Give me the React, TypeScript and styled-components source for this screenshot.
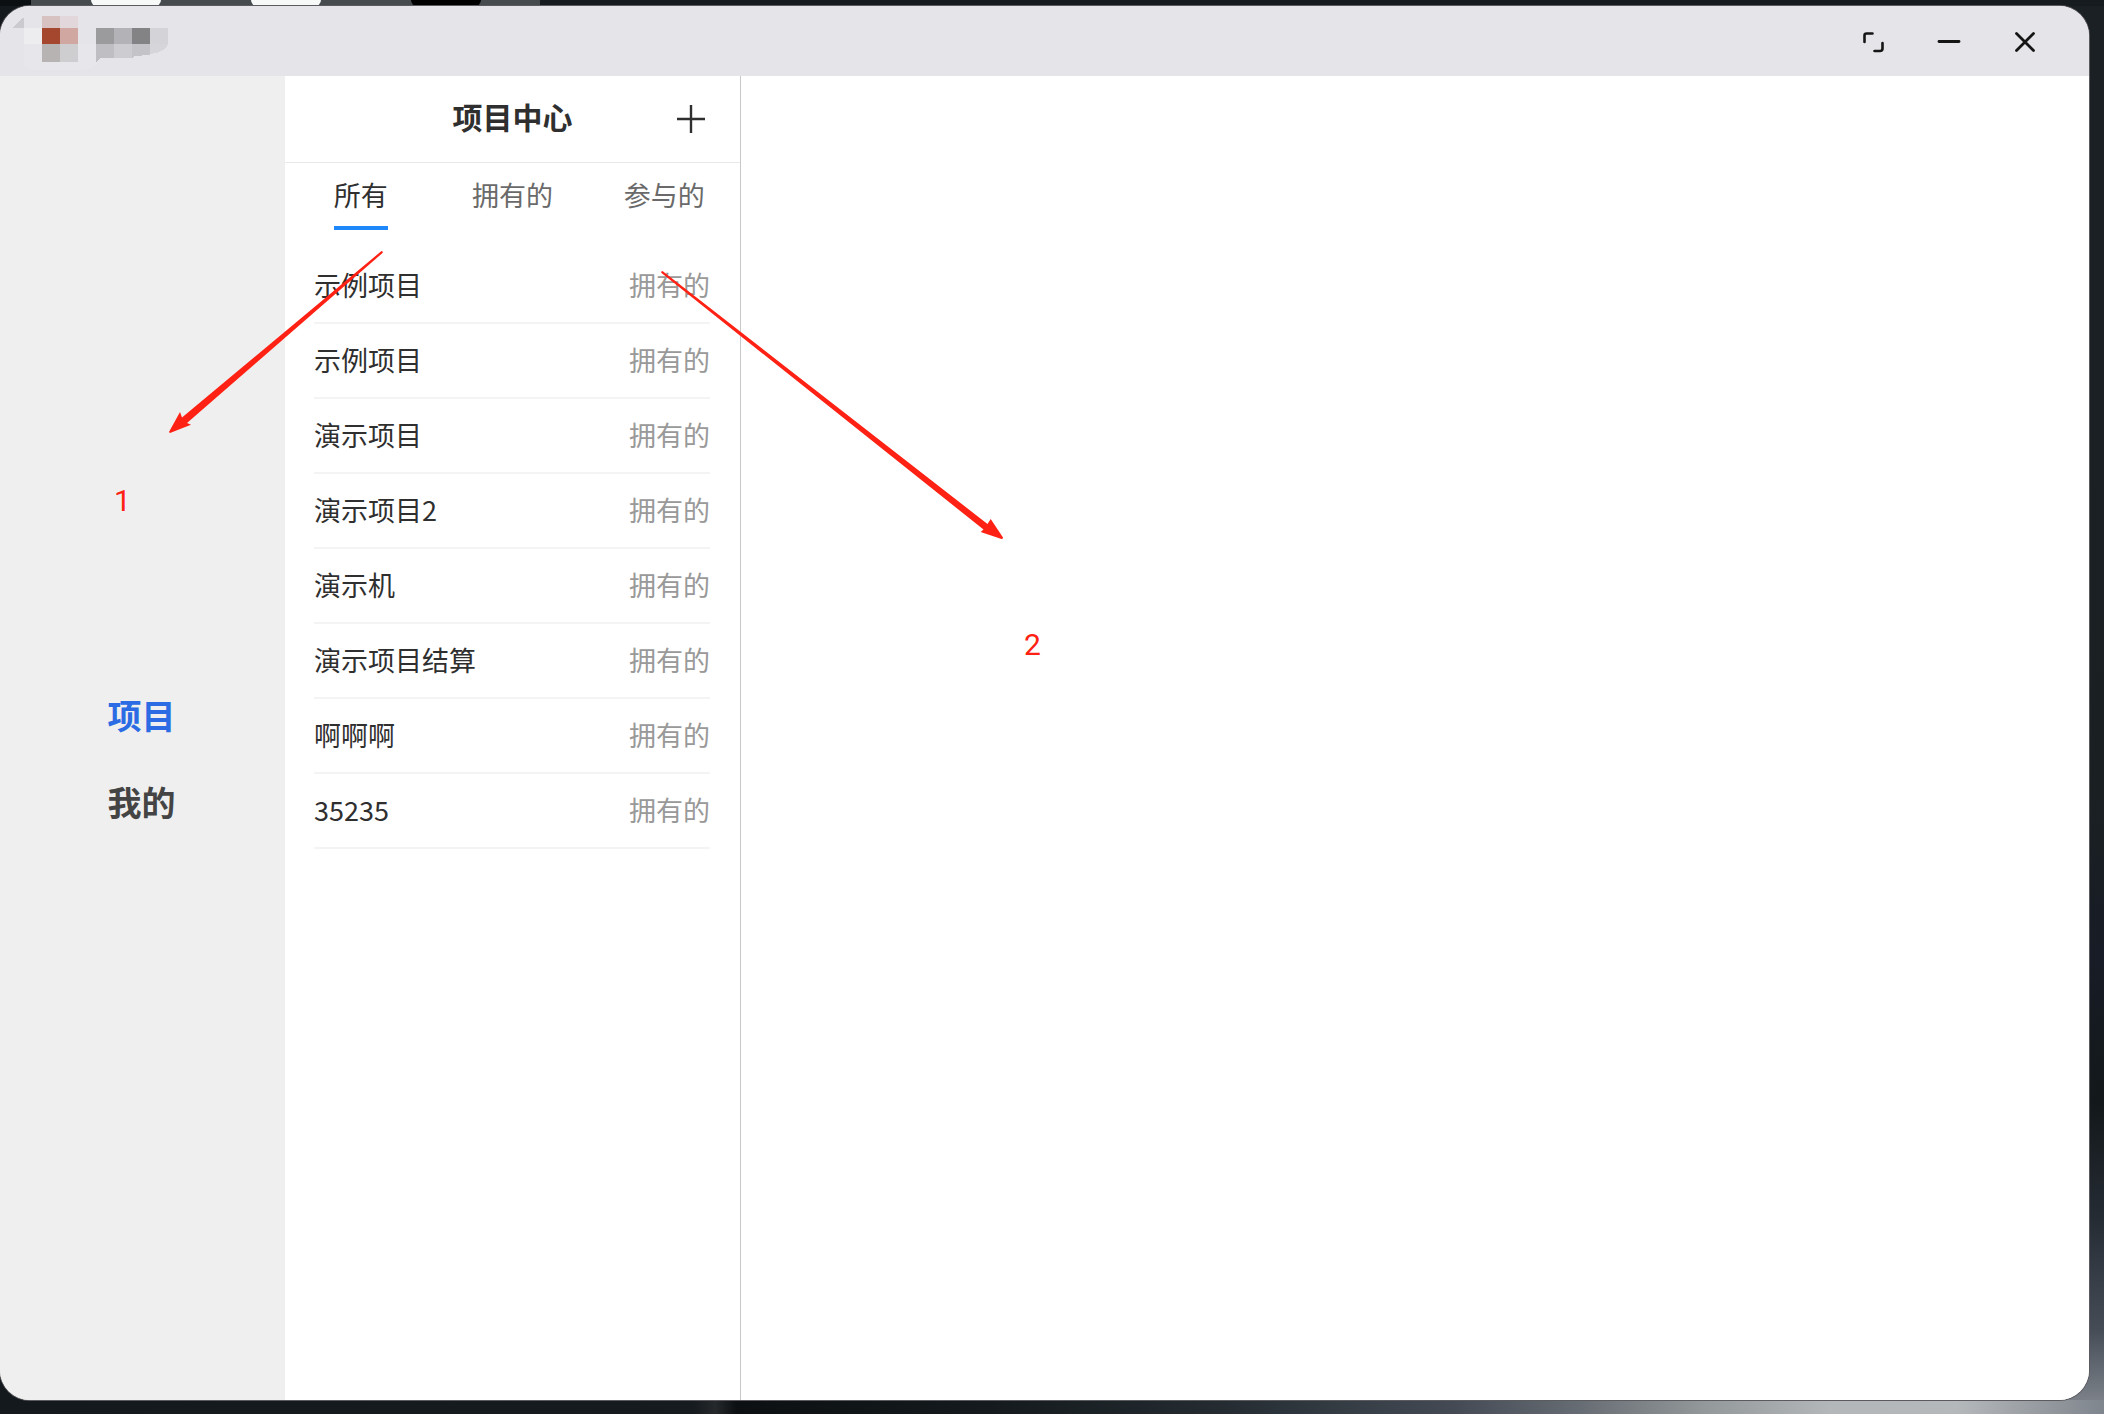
import React, { useState } from "react";
import styled, { createGlobalStyle } from "styled-components";

const GlobalStyle = createGlobalStyle`
  *, *::before, *::after { box-sizing: border-box; }
  html { background: #14191d; }
  body {
    margin: 0;
    font-family: "Noto Sans CJK SC", "Noto Sans", sans-serif;
    color: #2f2f2f;
  }
  button { font: inherit; color: inherit; border: 0; padding: 0; background: none; cursor: pointer; }
`;

const Desktop = styled.div`
  position: relative;
  display: flex;
  flex-direction: column;
  min-height: 100vh;
  padding: 0 15px 14px 0;
  background:
    linear-gradient(90deg, #14191d 0, #161b1f 33%, #26292c 34%, #0c1013 35%, #141a1d 47%, #242c32 58%, #434a54 69%, #666c73 75%, #93989a 81%, #b3b7b9 87%, #b5b8bb 93%, #7f858d 100%) bottom / 100% 14px no-repeat,
    linear-gradient(180deg, #1a2024 0, #1a2022 56%, #171c26 68%, #13181a 78%, #242b33 86%, #454c56 94%, #868b92 100%) right / 50px 100% no-repeat,
    #14191d;
`;

const DockStrip = styled.div`
  display: flex;
  height: 6px;
  margin-right: -15px;
  background: #161b20;
`;

const DockEdge = styled.span`
  width: 31px;
  background: #0b0f12;
`;

const Dock = styled.div`
  display: flex;
  gap: 90px;
  width: 509px;
  padding-left: 60px;
  background: #464b4d;
`;

const DockIcon = styled.span<{ $color: string }>`
  width: 70px;
  border-radius: 0 0 8px 8px;
  background: ${(p) => p.$color};
`;

const Window = styled.main`
  flex: 1;
  display: flex;
  flex-direction: column;
  overflow: hidden;
  border-radius: 30px;
  background: #fff;
  box-shadow: 0 0 0 1px #5b5a5f;
`;

const TitleBar = styled.header`
  display: flex;
  align-items: center;
  justify-content: space-between;
  height: 70px;
  padding-right: 44px;
  background: #e5e4e9;
`;

const Brand = styled.svg`
  width: 180px;
  height: 70px;
`;

const WindowControls = styled.div`
  display: flex;
  gap: 36px;
`;

const IconButton = styled.button`
  display: grid;
  place-items: center;
  width: 40px;
  height: 40px;
`;

const Body = styled.div`
  flex: 1;
  display: grid;
  grid-template-columns: 285px 456px 1fr;
`;

const Sidebar = styled.nav`
  display: flex;
  flex-direction: column;
  align-items: center;
  justify-content: center;
  gap: 39px;
  padding: 41px 2px 0 0;
  background: #efefef;
`;

const NavButton = styled.button<{ $active: boolean }>`
  font-size: 34px;
  line-height: 48px;
  font-weight: 700;
  color: ${(p) => (p.$active ? "#2b6be4" : "#444")};
`;

const ProjectPanel = styled.section`
  border-right: 1px solid #c8c8c8;
`;

const PanelHeader = styled.div`
  display: grid;
  grid-template-columns: 1fr auto 1fr;
  align-items: center;
  height: 87px;
  padding: 0 29px;
  border-bottom: 1px solid #e9e9e9;
`;

const PanelTitle = styled.h1`
  grid-column: 2;
  margin: 0;
  padding-bottom: 6px;
  font-size: 30px;
  line-height: 44px;
  font-weight: 700;
`;

const AddButton = styled(IconButton)`
  justify-self: end;
`;

const Tabs = styled.div`
  display: grid;
  grid-template-columns: repeat(3, 1fr);
  justify-items: center;
  height: 67px;
`;

const Tab = styled.button<{ $active: boolean }>`
  padding-top: 1px;
  font-size: 27px;
  line-height: 38px;
  color: ${(p) => (p.$active ? "#2f2f2f" : "#6a6a6a")};
  border-bottom: 4px solid ${(p) => (p.$active ? "#1e88fa" : "transparent")};
`;

const ProjectList = styled.ul`
  margin: 0;
  padding: 19px 30px 0 29px;
  list-style: none;
`;

const ProjectRow = styled.li`
  display: flex;
  align-items: center;
  justify-content: space-between;
  height: 75px;
  padding-bottom: 1px;
  border-bottom: 2px solid #f4f4f4;
  font-size: 27px;
  line-height: 38px;
`;

const ProjectLink = styled.a`
  color: #2f2f2f;
  text-decoration: none;
`;

const Role = styled.span`
  color: #999;
`;

const Detail = styled.section`
  background: #fff;
`;

const Markup = styled.svg`
  position: absolute;
  inset: 0;
  width: 100%;
  height: 100%;
  pointer-events: none;
  fill: #ff2113;
`;

const MarkLabel = styled.span<{ $x: number; $y: number }>`
  position: absolute;
  left: ${(p) => p.$x}px;
  top: ${(p) => p.$y}px;
  font-family: Roboto, sans-serif;
  font-size: 30px;
  line-height: 44px;
  color: #ff2113;
  pointer-events: none;
`;

const dockIcons = ["#f7f8f8", "#f7f8f8", "#000"];
const navItems = ["项目", "我的"];
const tabItems = ["所有", "拥有的", "参与的"];
const projects = ["示例项目", "示例项目", "演示项目", "演示项目2", "演示机", "演示项目结算", "啊啊啊", "35235"];

export default function App() {
  const [nav, setNav] = useState("项目");
  const [tab, setTab] = useState("所有");

  return (
    <>
      <GlobalStyle />
      <Desktop>
        <DockStrip>
          <DockEdge />
          <Dock>
            {dockIcons.map((color, i) => (
              <DockIcon key={i} $color={color} />
            ))}
          </Dock>
        </DockStrip>
        <Window>
          <TitleBar>
            <Brand viewBox="0 0 180 70" aria-hidden="true" shapeRendering="crispEdges">
              <path d="M12 22 L22 12 H24 V22 Z" fill="#cbcacf" />
              <path d="M24 38 V56 Q24 64 38 64 H78 Q94 64 98 56 V38 Z" fill="#e7e6eb" />
              <rect x="24" y="22" width="18" height="16" fill="#ededef" />
              <rect x="42" y="10" width="18" height="12" fill="#d8c1c1" />
              <rect x="60" y="10" width="18" height="12" fill="#e2d7db" />
              <rect x="42" y="22" width="18" height="16" fill="#a5472f" />
              <rect x="60" y="22" width="18" height="16" fill="#d1a8a1" />
              <rect x="42" y="38" width="18" height="18" fill="#b7b3b2" />
              <rect x="60" y="38" width="18" height="18" fill="#cecdcf" />
              <rect x="96" y="22" width="18" height="16" fill="#9b9b9d" />
              <rect x="114" y="22" width="18" height="16" fill="#b3b2b7" />
              <rect x="132" y="22" width="18" height="16" fill="#838385" />
              <rect x="150" y="22" width="18" height="16" fill="#d4d3d8" />
              <path d="M96 38 H114 V52 H100 L96 56 Z" fill="#bfbec3" />
              <rect x="114" y="38" width="18" height="14" fill="#cdccd1" />
              <path d="M132 38 H150 V49 L134 50 L132 52 Z" fill="#c4c3c8" />
              <path d="M150 38 H168 Q166 46 150 48 Z" fill="#d6d5da" />
            </Brand>
            <WindowControls>
              <IconButton aria-label="最大化">
                <svg width="22" height="24" viewBox="0 0 22 24" fill="none" stroke="#151515" strokeWidth="2.6" strokeLinecap="round" strokeLinejoin="round">
                  <path d="M2.500 13 V6.500 Q2.500 4.500 4.500 4.500 H10.500 M20.500 14 V19.500 Q20.500 22 18 22 H12.500" />
                </svg>
              </IconButton>
              <IconButton aria-label="最小化">
                <svg width="24" height="22" viewBox="0 0 24 22" fill="none" stroke="#151515" strokeWidth="2.8" strokeLinecap="round">
                  <path d="M2 11.500 H22" />
                </svg>
              </IconButton>
              <IconButton aria-label="关闭">
                <svg width="22" height="24" viewBox="0 0 22 24" fill="none" stroke="#151515" strokeWidth="2.8" strokeLinecap="round">
                  <path d="M2.500 4.500 L19.500 21.500 M19.500 4.500 L2.500 21.500" />
                </svg>
              </IconButton>
            </WindowControls>
          </TitleBar>
          <Body>
            <Sidebar>
              {navItems.map((item) => (
                <NavButton key={item} $active={nav === item} onClick={() => setNav(item)}>
                  {item}
                </NavButton>
              ))}
            </Sidebar>
            <ProjectPanel>
              <PanelHeader>
                <PanelTitle>项目中心</PanelTitle>
                <AddButton aria-label="新建项目">
                  <svg width="28" height="28" viewBox="0 0 28 28" fill="none" stroke="#2f2f2f" strokeWidth="2.4">
                    <path d="M14 0 V28 M0 14 H28" />
                  </svg>
                </AddButton>
              </PanelHeader>
              <Tabs role="tablist">
                {tabItems.map((item) => (
                  <Tab key={item} role="tab" aria-selected={tab === item} $active={tab === item} onClick={() => setTab(item)}>
                    {item}
                  </Tab>
                ))}
              </Tabs>
              <ProjectList>
                {projects.map((name, i) => (
                  <ProjectRow key={i}>
                    <ProjectLink href="#">{name}</ProjectLink>
                    <Role>拥有的</Role>
                  </ProjectRow>
                ))}
              </ProjectList>
            </ProjectPanel>
            <Detail />
          </Body>
        </Window>
        <Markup aria-hidden="true">
          <path d="M381.500 251 Q383.500 251.500 382.500 253 L187 423 L191 424.700 L170 433 Q168.500 432.500 169.500 431 L180 412 L182 417.500 Z" />
          <path d="M662.500 271 L987.500 524 L990.700 519 L1003 537.500 Q1003 539 1001.500 539 L980.700 532 L983.500 529.500 L661.500 273 Q660.500 271.500 662.500 271 Z" />
        </Markup>
        <MarkLabel $x={114} $y={479}>1</MarkLabel>
        <MarkLabel $x={1024} $y={623}>2</MarkLabel>
      </Desktop>
    </>
  );
}
